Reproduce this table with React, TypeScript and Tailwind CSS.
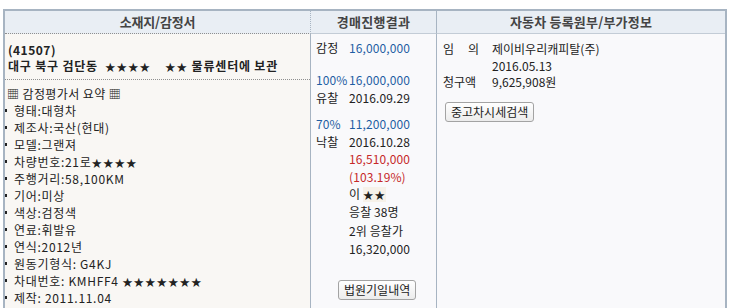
import type { ReactNode } from "react";

const font = { fontFamily: '"Noto Sans CJK KR", "Noto Sans", sans-serif' };

const specs = [
  "형태:대형차",
  "제조사:국산(현대)",
  "모델:그랜져",
  "차량번호:21로★★★★",
  "주행거리:58,100KM",
  "기어:미상",
  "색상:검정색",
  "연료:휘발유",
  "연식:2012년",
  "원동기형식: G4KJ",
  "차대번호: KMHFF4 ★★★★★★★",
  "제작: 2011.11.04",
];

// masked characters (★) are drawn a bit smaller than the text, as in the source page
function Masked({ text }: { text: string }) {
  const parts = text.split(/(★+)/);
  return (
    <>
      {parts.map((p, i) =>
        p.startsWith("★") ? (
          <span key={i} className="text-[10.5px] tracking-[1px]">
            {p}
          </span>
        ) : (
          <span key={i}>{p}</span>
        ),
      )}
    </>
  );
}

function Btn({ children }: { children: ReactNode }) {
  return (
    <button
      type="button"
      className="h-[20px] rounded-[3px] border border-[#a3a3a3] bg-gradient-to-b from-white to-[#ececec] px-[5px] text-[12px] leading-[18px] text-[#222]"
    >
      {children}
    </button>
  );
}

function Row({ label, value, tone = "" }: { label?: string; value: ReactNode; tone?: string }) {
  return (
    <div className="flex h-[17.5px] items-center">
      <span className="w-[33px] shrink-0 tracking-[0.3px]">{label}</span>
      <span className={`tracking-[0.1px] ${tone}`}>{value}</span>
    </div>
  );
}

export default function App() {
  return (
    <div className="min-h-screen bg-white pl-[3px] pt-[9px] text-[12px] text-[#222]" style={font}>
      <div className="w-[724px] border-x-2 border-t-2 border-[#a7b4c2]">
        <div className="grid grid-cols-[306px_126px_1fr]">
          {/* header */}
          <div className="flex h-[23px] items-center justify-center border-b border-r border-dotted border-b-[#8f8f8f] border-r-[#a7b4c2] bg-[#e9eef4] text-[13px] font-bold tracking-[-0.2px] text-[#444]">
            소재지/감정서
          </div>
          <div className="flex h-[23px] items-center justify-center border-b border-r border-b-[#c3ccd6] border-r-[#a7b4c2] bg-[#e9eef4] text-[13px] font-bold tracking-[0.3px] text-[#444]">
            경매진행결과
          </div>
          <div className="flex h-[23px] items-center justify-center border-b border-b-[#c3ccd6] bg-[#e9eef4] text-[13px] font-bold tracking-[0.2px] text-[#444]">
            자동차 등록원부/부가정보
          </div>

          {/* 소재지 / 감정서 */}
          <div className="border-r border-[#a7b4c2] bg-[#f9f7f4] pb-[4px]">
            <div className="border-b border-dotted border-[#8f8f8f] pb-[4px] pl-[3px] pt-[8px] font-bold leading-[16px]">
              <div className="tracking-[0.5px]">(41507)</div>
              <div className="whitespace-pre tracking-[0.8px]">
                <Masked text="대구 북구 검단동  ★★★★    ★★ 물류센터에 보관" />
              </div>
            </div>
            <div className="pl-[2px] pt-[5px] leading-[17px] tracking-[0.4px]">▦ 감정평가서 요약 ▦</div>
            <ul className="leading-[17px]">
              {specs.map((s) => (
                <li key={s} className="flex h-[17px] items-center">
                  <span className="mr-[7px] h-[3px] w-[2px] bg-[#222]" />
                  <span className="tracking-[0.7px]">
                    <Masked text={s} />
                  </span>
                </li>
              ))}
            </ul>
          </div>

          {/* 경매진행결과 */}
          <div className="border-r border-[#a7b4c2] bg-[#f9f9fb] pl-[5px] pt-[5px]">
            <Row label="감정" value="16,000,000" tone="text-[#1f5ea3]" />
            <div className="mt-[15px]">
              <div className="flex h-[17.5px] items-center tracking-[0.1px] text-[#1f5ea3]">
                <span className="w-[33px] shrink-0">100%</span>
                <span>16,000,000</span>
              </div>
              <Row label="유찰" value="2016.09.29" />
            </div>
            <div className="mt-[9px]">
              <div className="flex h-[17.5px] items-center tracking-[0.1px] text-[#1f5ea3]">
                <span className="w-[33px] shrink-0">70%</span>
                <span>11,200,000</span>
              </div>
              <Row label="낙찰" value="2016.10.28" />
              <Row value="16,510,000" tone="text-[#c62828]" />
              <Row value="(103.19%)" tone="text-[#c62828]" />
              <Row
                value={
                  <>
                    이 <span className="bg-[#f6f1e9] text-[10.5px] tracking-[1px]">★★</span>
                  </>
                }
              />
              <Row value="응찰 38명" />
            </div>
            <div className="mt-[2px]">
              <Row value="2위 응찰가" />
              <Row value="16,320,000" />
            </div>
            <div className="mt-[22px] pl-[22px]">
              <Btn>법원기일내역</Btn>
            </div>
          </div>

          {/* 자동차 등록원부 */}
          <div className="bg-[#f9f9fb] pl-[6px] pt-[7px] leading-[16.7px]">
            <div className="flex">
              <span className="mr-[13px] flex w-[36px] justify-between">
                <span>임</span>
                <span>의</span>
              </span>
              <div>
                <div>제이비우리캐피탈(주)</div>
                <div>2016.05.13</div>
              </div>
            </div>
            <div className="flex">
              <span className="mr-[13px] w-[36px]">청구액</span>
              <span>9,625,908원</span>
            </div>
            <div className="mt-[11px] pl-[2px]">
              <Btn>중고차시세검색</Btn>
            </div>
          </div>
        </div>
      </div>
    </div>
  );
}
